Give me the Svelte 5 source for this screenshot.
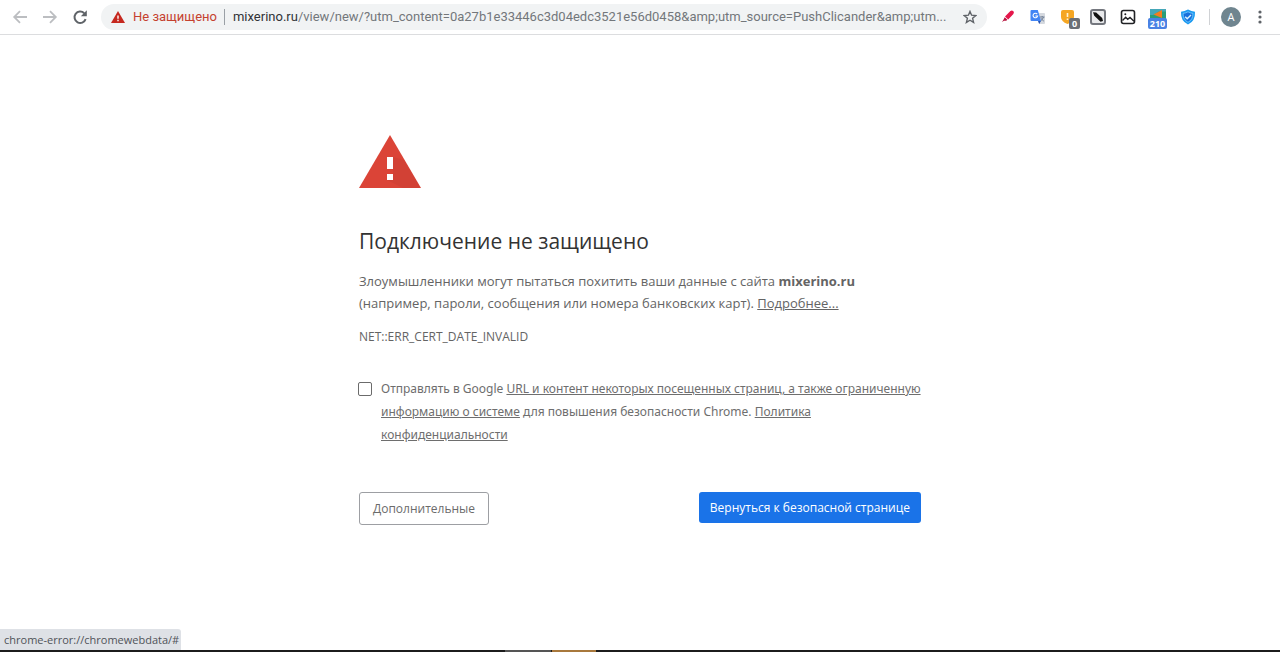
<script>
  const site = 'mixerino.ru';
  const path = '/view/new/?utm_content=0a27b1e33446c3d04edc3521e56d0458&amp;utm_source=PushClicander&amp;utm...';

  let report = $state(false);
</script>

<div class="window">
  <header class="toolbar">
    <nav class="nav">
      <button class="icon-btn" aria-label="Назад" disabled>
        <svg width="16" height="16" viewBox="0 0 16 16" fill="none" stroke="#bcbec1" stroke-width="1.8">
          <path d="M15 8H2.5M8 2.2 2.2 8 8 13.8" />
        </svg>
      </button>
      <button class="icon-btn" aria-label="Вперёд" disabled>
        <svg width="16" height="16" viewBox="0 0 16 16" fill="none" stroke="#bcbec1" stroke-width="1.8">
          <path d="M1 8h12.5M8 2.2 13.8 8 8 13.8" />
        </svg>
      </button>
      <button class="icon-btn" aria-label="Обновить">
        <svg width="16" height="16" viewBox="0 0 16 16">
          <path d="M13.6 10.2A5.7 5.7 0 1 1 12.2 4.2" fill="none" stroke="#5f6368" stroke-width="2" />
          <path d="M14.8 1.2v6H8.8z" fill="#5f6368" />
        </svg>
      </button>
    </nav>

    <div class="omnibox">
      <button class="security">
        <svg width="14" height="12" viewBox="0 0 14 12">
          <path d="M7 0 14 12H0z" fill="#c5281f" />
          <path d="M6.3 4.5h1.4v3.3H6.3zM6.3 8.8h1.4v1.4H6.3z" fill="#fff" />
        </svg>
        <span>Не защищено</span>
      </button>
      <span class="url"><span class="host">{site}</span>{path}</span>
      <button class="icon-btn" aria-label="Добавить в закладки">
        <svg width="14" height="14" viewBox="0 0 14 14" fill="none" stroke="#5f6368" stroke-width="1.4">
          <path d="M7 1.4 8.6 5.2l4.2.4-3.2 2.7 1 4.1L7 10.2l-3.6 2.2 1-4.1L1.2 5.6l4.2-.4z" />
        </svg>
      </button>
    </div>

    <div class="extensions">
      <button class="icon-btn" aria-label="Маркер">
        <svg width="16" height="16" viewBox="0 0 16 16">
          <path d="M5 7.4 10.4 2q1.4-1.200 2.800 0t.2 2.900L8.200 10.400z" fill="#e5174b" />
          <path d="m4.700 8.200 2.700 2.600-1.200.9H4L2 13l1.600-2.400z" fill="#b7123d" />
        </svg>
      </button>
      <button class="icon-btn" aria-label="Переводчик">
        <svg width="16" height="16" viewBox="0 0 16 16">
          <path d="M6 4h8q1 0 1 1v9q0 1-1 1H9z" fill="#d5d9df" />
          <path d="M1.5 1h6.300l3.200 11H1.500q-1 0-1-1V2q0-1 1-1z" fill="#4285f4" />
          <path d="M8 12h3l-1.800 3z" fill="#2453b3" />
          <path d="M7.200 5.100A2.300 2.300 0 1 0 7.600 7H5.400" fill="none" stroke="#fff" stroke-width="1.1" />
          <path d="M10 8h4.500M12.200 7v1M13.500 8q-.8 2.600-2.800 3.800M11 9.200q1 1.800 2.800 2.900" fill="none" stroke="#6f7f95" />
        </svg>
      </button>
      <button class="icon-btn" aria-label="Защита">
        <svg width="16" height="16" viewBox="0 0 16 16">
          <path d="M3 1h9q2 0 2 2v5q0 4.500-6.500 7Q1 12.500 1 8V3q0-2 2-2z" fill="#f5a623" />
          <path d="M7.500 4v4M7.500 9.500V11" stroke="#fff3d6" stroke-width="1.6" />
        </svg>
        <span class="badge grey">0</span>
      </button>
      <button class="icon-btn" aria-label="Фонарик">
        <svg width="16" height="16" viewBox="0 0 16 16">
          <rect x="1" y="1" width="14" height="14" rx="2" fill="#e9eaec" stroke="#74777e" stroke-width="2" />
          <path d="m3 3.200 3.200.3 6 5.500.8 3-2.500.8-6.200-6z" fill="#111" />
        </svg>
      </button>
      <button class="icon-btn" aria-label="Картинки">
        <svg width="16" height="16" viewBox="0 0 16 16" fill="none" stroke="#202124" stroke-width="1.6">
          <rect x="1.500" y="1.500" width="13" height="13" rx="2" />
          <path d="m2.500 11.500 3.200-3.200 2 2L10 8.500l4 3.800" stroke-width="1.4" />
          <circle cx="5.300" cy="5.200" r="1" fill="#202124" stroke="none" />
        </svg>
      </button>
      <button class="icon-btn" aria-label="Скриншот">
        <svg width="16" height="16" viewBox="0 0 16 16">
          <path d="M0 0h16v10H0z" fill="#2a9d78" />
          <path d="M0 0h16v2.500H9L3 6H0z" fill="#45a7b8" />
          <path d="M3.500 5.500 12 1v8z" fill="#f57c1f" />
        </svg>
        <span class="badge blue">210</span>
      </button>
      <button class="icon-btn" aria-label="Антивирус">
        <svg width="16" height="16" viewBox="0 0 16 16">
          <path d="M8 .5q3.500 2 7 2.200Q15.500 12 8 15.500.5 12 1 2.700 4.500 2.500 8 .5z" fill="#1a9af0" />
          <path d="M8 2.800q2.500 1.300 5 1.600Q13 10.700 8 13.300 3 10.700 3 4.400 5.500 4.100 8 2.800z" fill="#1670dc" stroke="#7fd0ff" stroke-width=".8" />
          <path d="m5.200 7.800 2 2L11 6" fill="none" stroke="#d8f2ff" stroke-width="1.4" />
        </svg>
      </button>
    </div>

    <div class="profile">
      <span class="separator"></span>
      <button class="avatar" aria-label="Профиль">A</button>
      <button class="icon-btn" aria-label="Меню">
        <svg width="16" height="16" viewBox="0 0 16 16" fill="#5f6368">
          <circle cx="8" cy="3" r="1.600" />
          <circle cx="8" cy="8" r="1.600" />
          <circle cx="8" cy="13" r="1.600" />
        </svg>
      </button>
    </div>
  </header>

  <main class="interstitial">
    <svg class="warning" width="62" height="53" viewBox="0 0 62 53">
      <path d="M31 0 62 53H0z" fill="#db4437" />
      <path d="m34 22 11 3 16.400 28H44L28 45l6-6v-5z" fill="#c43c33" opacity=".35" />
      <path d="M28 22h6v12h-6zM28 39h6v6h-6z" fill="#fff" />
    </svg>

    <h1>Подключение не защищено</h1>
    <p class="lead">
      Злоумышленники могут пытаться похитить ваши данные с сайта <strong>{site}</strong>
      (например, пароли, сообщения или номера банковских карт). <a href="#more">Подробнее...</a>
    </p>
    <p class="code">NET::ERR_CERT_DATE_INVALID</p>

    <div class="optin">
      <input id="report" type="checkbox" bind:checked={report} />
      <label for="report">
        Отправлять в Google <a href="#data">URL и контент некоторых посещенных страниц, а также ограниченную
        информацию о системе</a> для повышения безопасности Chrome. <a href="#privacy">Политика
        конфиденциальности</a>
      </label>
    </div>

    <div class="actions">
      <button class="secondary">Дополнительные</button>
      <button class="primary">Вернуться к безопасной странице</button>
    </div>
  </main>

  <div class="status">chrome-error://chromewebdata/#</div>
  <footer class="taskbar">
    <span class="task"></span>
    <span class="task active"></span>
  </footer>
</div>

<style>
  :global(body) {
    background: #fff;
  }

  .window {
    display: flex;
    flex-direction: column;
    min-height: 100vh;
    font-family: "Open Sans", "Noto Sans", sans-serif;
    color: #646464;
  }

  button {
    font-family: inherit;
    cursor: pointer;
  }

  a {
    color: inherit;
    text-decoration: underline;
  }

  /* Toolbar */

  .toolbar {
    display: flex;
    align-items: center;
    height: 34px;
    border-bottom: 1px solid #dcdddf;
  }

  .nav {
    display: flex;
    gap: 14px;
    padding: 0 13px 0 12px;
  }

  .icon-btn {
    position: relative;
    display: flex;
    align-items: center;
    justify-content: center;
    flex: none;
    width: 16px;
    height: 16px;
    padding: 0;
    border: none;
    background: none;
  }

  .omnibox {
    flex: 1;
    min-width: 0;
    display: flex;
    align-items: center;
    height: 26px;
    padding: 0 9px;
    border-radius: 13px;
    background: #f1f3f4;
    font-family: Roboto, sans-serif;
    font-size: 13px;
    line-height: 18px;
  }

  .security {
    display: flex;
    align-items: center;
    gap: 8px;
    flex: none;
    padding: 0 7px 0 1px;
    border: none;
    border-right: 1px solid #9aa0a6;
    background: none;
    font-size: 13px;
    line-height: 16px;
    color: #c5412f;
  }

  .url {
    flex: 1;
    min-width: 0;
    padding: 0 8px;
    overflow: hidden;
    white-space: nowrap;
    color: #73777b;
  }

  .host {
    color: #303236;
  }

  .extensions {
    display: flex;
    gap: 14px;
    padding: 0 13px;
  }

  .profile {
    display: flex;
    align-items: center;
    gap: 11px;
    padding-right: 12px;
  }

  .badge {
    position: absolute;
    top: 9px;
    border-radius: 2px;
    font-size: 9px;
    font-weight: 700;
    line-height: 11px;
    text-align: center;
    color: #fff;
  }

  .badge.grey {
    left: 9px;
    width: 11px;
    background: #6b6f76;
  }

  .badge.blue {
    left: -2px;
    width: 19px;
    background: #4a82e4;
  }

  .separator {
    width: 1px;
    height: 16px;
    background: #d0d2d5;
  }

  .avatar {
    width: 20px;
    height: 20px;
    padding: 0;
    border: none;
    border-radius: 50%;
    background: #6f858f;
    font-size: 11px;
    line-height: 20px;
    color: #fff;
  }

  /* Warning page */

  .interstitial {
    flex: 1;
    box-sizing: border-box;
    width: 100%;
    max-width: 562px;
    margin: 0 auto;
    padding-top: 100px;
  }

  .warning {
    display: block;
  }

  h1 {
    margin: 38px 0 14px;
    font-size: 21px;
    font-weight: 400;
    line-height: 30px;
    color: #333;
  }

  .lead {
    margin: 0;
    font-size: 13px;
    line-height: 22px;
  }

  .code {
    margin: 12px 0 0;
    font-size: 12px;
    line-height: 22px;
  }

  /* Wraps slightly past the column so the first line keeps its last word */
  .optin {
    display: flex;
    gap: 9px;
    margin: 29px -4px 0 0;
    font-family: "Noto Sans", sans-serif;
    font-size: 12px;
    line-height: 23px;
    color: #6e6e6e;
  }

  .optin input {
    appearance: none;
    flex: none;
    width: 14px;
    height: 14px;
    margin: 5px 0 0 -1px;
    border: 1px solid #6b6b6b;
    border-radius: 2px;
    background: #fff;
  }

  .optin input:checked {
    background: #1a73e8;
  }

  .actions {
    display: flex;
    align-items: flex-start;
    justify-content: space-between;
    margin-top: 46px;
  }

  .actions button {
    border-radius: 3px;
    font-size: 12px;
    line-height: 19px;
  }

  .secondary {
    padding: 6px 13px;
    border: 1px solid #9d9fa3;
    background: #fff;
    color: #6b6b6b;
  }

  .primary {
    padding: 6px 11px;
    border: none;
    background: #1a73e8;
    color: #fff;
  }

  /* Bottom edge */

  .status {
    align-self: flex-start;
    padding: 0 2px 0 4px;
    border-top-right-radius: 3px;
    background: #dee1e6;
    font-size: 11px;
    line-height: 21px;
    color: #505358;
  }

  .taskbar {
    display: flex;
    gap: 1px;
    height: 2px;
    padding-left: 505px;
    background: #1c1c1c;
  }

  .task {
    width: 46px;
    background: #555;
  }

  .task.active {
    width: 44px;
    background: #a8783c;
  }
</style>
